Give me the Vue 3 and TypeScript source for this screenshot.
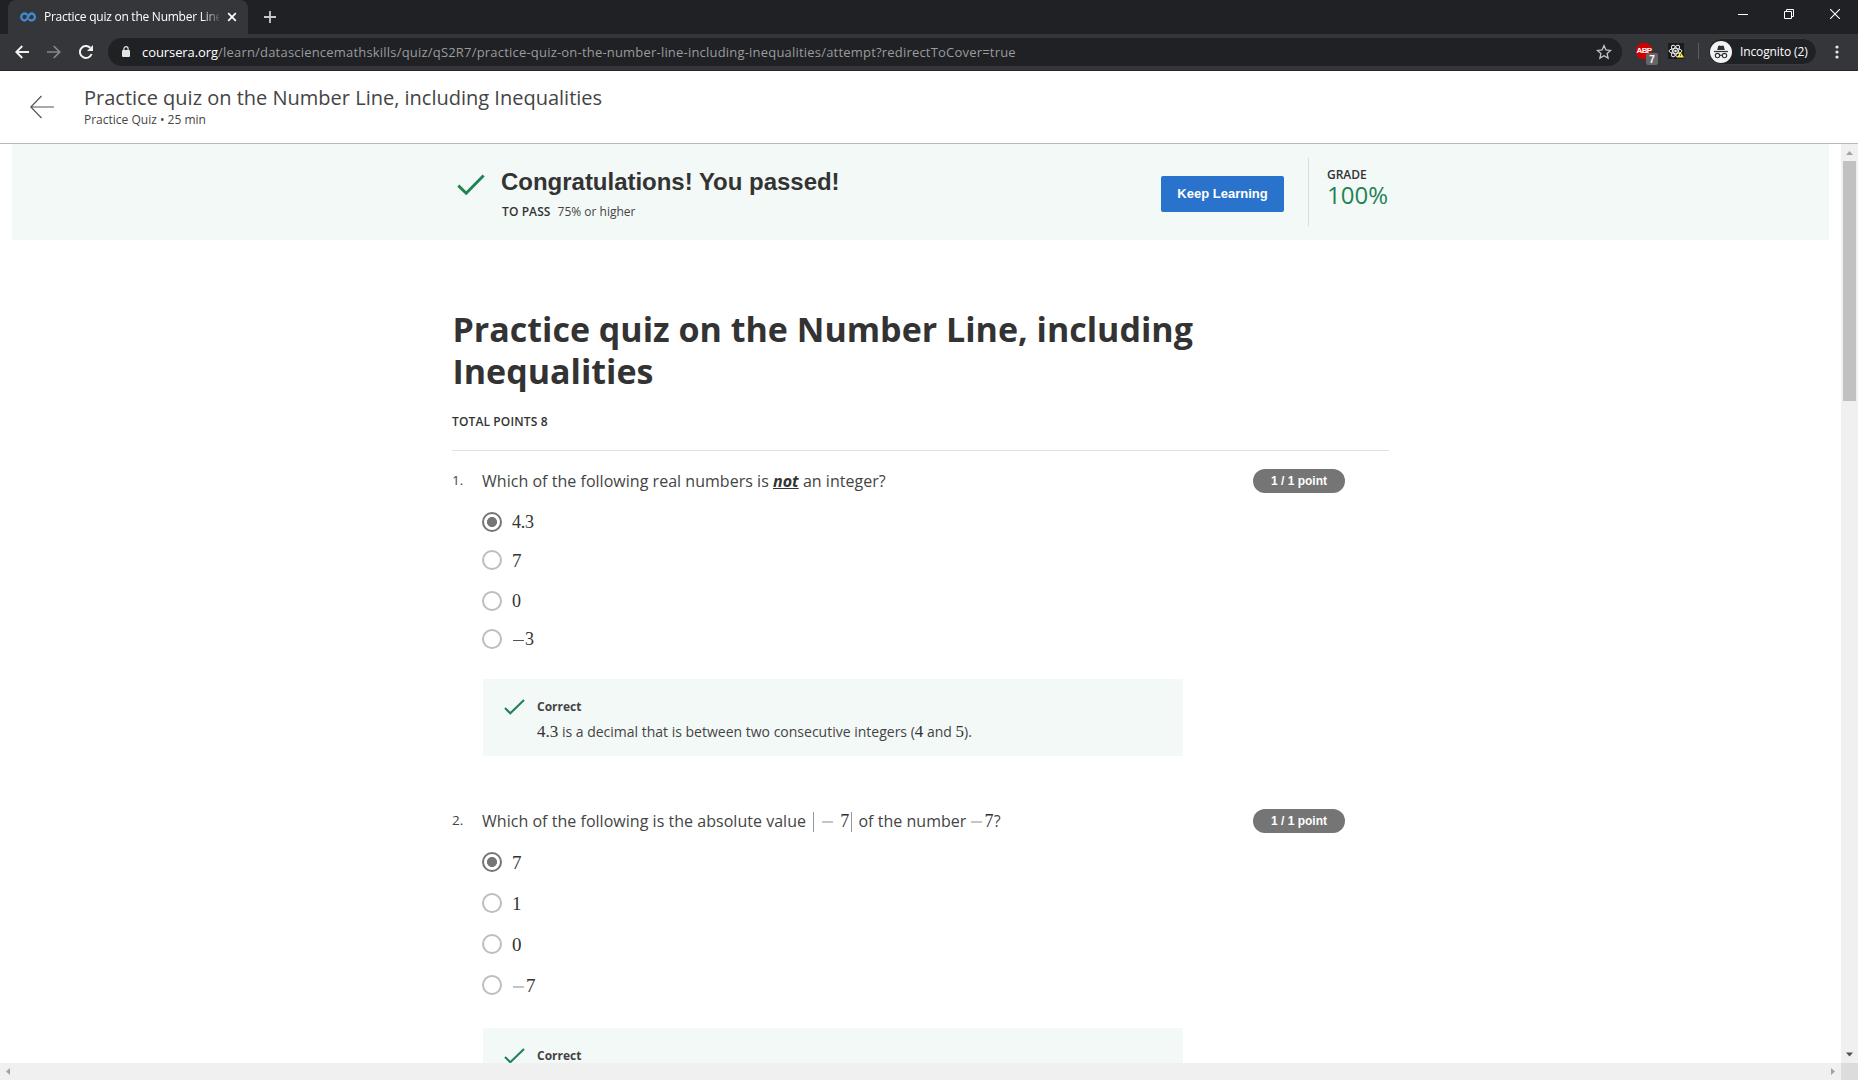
<script setup lang="ts">
interface Option {
  text: string
  checked?: boolean
  roomy?: boolean
  low?: boolean
  minus?: 'faint' | 'dark'
}

const firstOptions: Option[] = [
  { text: '4.3', checked: true },
  { text: '7', low: true },
  { text: '0', roomy: true },
  { text: '3', minus: 'dark' },
]
const secondOptions: Option[] = [
  { text: '7', checked: true, low: true },
  { text: '1', roomy: true, low: true },
  { text: '0', roomy: true, low: true },
  { text: '7', roomy: true, low: true, minus: 'faint' },
]
</script>

<template>
  <div class="window">
    <div class="tabstrip">
      <div class="tab">
        <svg class="favicon" width="16" height="10" viewBox="0 0 16 10">
          <path d="M7.300 3.200C6.700 2.100 5.900 1.500 4.700 1.500a3.500 3.500 0 0 0 0 7c3.300 0 3.300-7 6.700-7a3.500 3.500 0 0 1 0 7c-1.300 0-2.100-.6-2.700-1.600" fill="none" stroke="#3f8ad0" stroke-width="2.300" />
        </svg>
        <span class="tab-title">Practice quiz on the Number Line</span>
        <svg class="tab-close" width="10" height="10" viewBox="0 0 10 10"><path d="M1.200 1.200l7.600 7.600M8.800 1.200L1.200 8.800" stroke="#fff" stroke-width="1.700" /></svg>
      </div>
      <svg class="new-tab" width="12" height="12" viewBox="0 0 12 12"><path d="M6 0v12M0 6h12" stroke="#c8c9cb" stroke-width="1.800" /></svg>
      <div class="controls">
        <svg width="10" height="10" viewBox="0 0 10 10"><path d="M0 5.500h10" stroke="#fff" /></svg>
        <svg width="10" height="10" viewBox="0 0 10 10"><path d="M.5 2.500h7v7h-7zM2.500 2.500v-2h7v7h-2" fill="none" stroke="#fff" /></svg>
        <svg width="10" height="10" viewBox="0 0 10 10"><path d="M0 0l10 10M10 0L0 10" stroke="#fff" stroke-width="1.100" /></svg>
      </div>
    </div>

    <div class="toolbar">
      <svg class="nav" width="14" height="14" viewBox="0 0 14 14"><path d="M14 7H1.500M7.300 1L1.300 7l6 6" fill="none" stroke="#f1f1f2" stroke-width="1.900" /></svg>
      <svg class="nav" width="14" height="14" viewBox="0 0 14 14"><path d="M0 7h12.500M6.700 1l6 6-6 6" fill="none" stroke="#87888a" stroke-width="1.700" /></svg>
      <svg class="nav reload" width="14" height="14" viewBox="0 0 14 14"><path d="M12.600 9A6 6 0 1 1 11.300 2.800" fill="none" stroke="#f1f1f2" stroke-width="2" /><path d="M14 0v6H8z" fill="#f1f1f2" /></svg>
      <div class="omnibox">
        <svg width="8" height="11" viewBox="0 0 8 11"><rect y="4" width="8" height="7" rx="1" fill="#e4e4e5" /><path d="M1.900 4.500V2.800a2.100 2.100 0 0 1 4.200 0v1.700" fill="none" stroke="#e4e4e5" stroke-width="1.200" /></svg>
        <div class="url"><b>coursera.org</b>/learn/datasciencemathskills/quiz/qS2R7/practice-quiz-on-the-number-line-including-inequalities/attempt?redirectToCover=true</div>
        <svg class="star" width="16" height="16" viewBox="0 0 16 16"><path d="M8 1.600l1.900 4.300 4.700.5-3.500 3.100 1 4.600L8 11.700l-4.100 2.400 1-4.600L1.400 6.400l4.700-.5z" fill="none" stroke="#c3c4c6" stroke-width="1.300" /></svg>
      </div>
      <div class="abp">
        <svg width="16" height="16" viewBox="0 0 16 16"><path d="M4.700 0h6.600L16 4.700v6.600L11.300 16H4.700L0 11.300V4.700z" fill="#d00000" /></svg>
        <span class="abp-text">ABP</span>
        <span class="abp-count">7</span>
      </div>
      <svg class="react" width="16" height="16" viewBox="0 0 16 16">
        <rect width="16" height="16" fill="#1b1b1b" />
        <g fill="none" stroke="#e8e8e8" stroke-width="1"><ellipse cx="7.500" cy="8" rx="6.400" ry="2.500" /><ellipse cx="7.500" cy="8" rx="6.400" ry="2.500" transform="rotate(60 7.500 8)" /><ellipse cx="7.500" cy="8" rx="6.400" ry="2.500" transform="rotate(120 7.500 8)" /></g>
        <circle cx="7.500" cy="8" r="1.300" fill="#e8e8e8" />
        <path d="M12.500 9l3.500 5.600H9z" fill="#ffee3b" /><path d="M12.500 11v2" stroke="#555" stroke-width=".8" />
      </svg>
      <i class="separator"></i>
      <div class="incognito">
        <svg width="22" height="22" viewBox="0 0 22 22">
          <circle cx="11" cy="11" r="11" fill="#f1f3f4" />
          <path d="M7.200 9l1-4.100 1.500-.4 1.300.5 1.300-.5 1.500.4 1 4.100z" fill="#303134" /><path d="M4 10.500h14" stroke="#303134" stroke-width="1.200" />
          <g fill="none" stroke="#303134" stroke-width="1.100"><circle cx="7.500" cy="14.600" r="2.200" /><circle cx="14.500" cy="14.600" r="2.200" /><path d="M9.700 14.500q1.300-.8 2.600 0" /></g>
        </svg>
        <span>Incognito (2)</span>
      </div>
      <svg class="menu" width="4" height="14" viewBox="0 0 4 14"><g fill="#e8e8e9"><circle cx="2" cy="2" r="1.600" /><circle cx="2" cy="7" r="1.600" /><circle cx="2" cy="12" r="1.600" /></g></svg>
    </div>

    <header class="page-header">
      <svg class="back" width="24" height="24" viewBox="0 0 24 24"><path d="M24 12H1M11.500 1L.8 12l10.700 11" fill="none" stroke="#555" stroke-width="1.200" /></svg>
      <div>
        <div class="header-title">Practice quiz on the Number Line, including Inequalities</div>
        <div class="header-sub">Practice Quiz • 25 min</div>
      </div>
    </header>

    <div class="viewport">
      <main class="content">
        <section class="banner">
          <svg class="big-check" width="28" height="22" viewBox="0 0 28 22"><path d="M1.300 11.600L9.200 19.300 26.600 1.500" fill="none" stroke="#1f8354" stroke-width="2.900" /></svg>
          <div class="result">
            <div class="congrats">Congratulations! You passed!</div>
            <div class="pass"><b>TO PASS</b><span>75% or higher</span></div>
          </div>
          <button class="keep">Keep Learning</button>
          <div class="grade"><b>GRADE</b><span>100%</span></div>
        </section>

        <div class="quiz">
          <h1>Practice quiz on the Number Line, including<br />Inequalities</h1>
          <div class="total">TOTAL POINTS 8</div>

          <section class="question">
            <span class="num">1.</span>
            <div class="body">
              <p class="prompt prompt-one">Which of the following real numbers is <em>not</em> an integer?</p>
              <div class="options">
                <div v-for="(o, i) in firstOptions" :key="i" class="option" :class="{ roomy: o.roomy, low: o.low }">
                  <i class="radio" :class="{ checked: o.checked }"></i><span class="math"><i v-if="o.minus" class="minus" :class="o.minus"></i>{{ o.text }}</span>
                </div>
              </div>
              <div class="feedback">
                <svg width="21" height="17" viewBox="0 0 21 17"><path d="M1 8.900l5.300 5.300L20 1" fill="none" stroke="#1f8354" stroke-width="2.100" /></svg>
                <div>
                  <div class="correct">Correct</div>
                  <div class="explain"><span class="m">4.3</span> is a decimal that is between two consecutive integers (<span class="m">4</span> and <span class="m">5</span>).</div>
                </div>
              </div>
            </div>
            <span class="points">1 / 1 point</span>
          </section>

          <section class="question second">
            <span class="num">2.</span>
            <div class="body">
              <p class="prompt prompt-two">Which of the following is the absolute value <i class="bar"></i><i class="minus in-bars"></i><span class="m">7</span><i class="bar after"></i> of the number <i class="minus"></i><span class="m">7</span>?</p>
              <div class="options">
                <div v-for="(o, i) in secondOptions" :key="i" class="option" :class="{ roomy: o.roomy, low: o.low }">
                  <i class="radio" :class="{ checked: o.checked }"></i><span class="math"><i v-if="o.minus" class="minus" :class="o.minus"></i>{{ o.text }}</span>
                </div>
              </div>
              <div class="feedback">
                <svg width="21" height="17" viewBox="0 0 21 17"><path d="M1 8.900l5.300 5.300L20 1" fill="none" stroke="#1f8354" stroke-width="2.100" /></svg>
                <div><div class="correct">Correct</div></div>
              </div>
            </div>
            <span class="points">1 / 1 point</span>
          </section>
        </div>
      </main>
      <div class="vscroll">
        <svg width="17" height="17" viewBox="0 0 17 17"><path d="M5 11l3.500-4 3.500 4z" fill="#a3a3a3" /></svg>
        <div class="thumb"></div>
        <svg width="17" height="17" viewBox="0 0 17 17"><path d="M5 6.500h7l-3.500 4z" fill="#505050" /></svg>
      </div>
    </div>
    <div class="hscroll">
      <svg width="17" height="17" viewBox="0 0 17 17"><path d="M10 5v7L6 8.500z" fill="#a3a3a3" /></svg>
      <svg class="right" width="17" height="17" viewBox="0 0 17 17"><path d="M7 5v7l4-3.500z" fill="#a3a3a3" /></svg>
      <i class="corner"></i>
    </div>
  </div>
</template>

<style>
body { overflow: hidden; }
</style>

<style scoped>
* { box-sizing: border-box; }
svg { display: block; flex: none; }
.window { width: 1858px; height: 1080px; display: flex; flex-direction: column; background: #fff; color: #333; font-family: "Open Sans", sans-serif; overflow: hidden; }

.tabstrip { height: 34px; flex: none; display: flex; background: #202124; padding-left: 8px; }
.tab { width: 240px; display: flex; align-items: center; background: #35363a; border-radius: 8px 8px 0 0; padding-left: 12px; }
.tab-title { width: 175px; margin-left: 8px; white-space: nowrap; overflow: hidden; font-size: 12px; letter-spacing: -0.250px; line-height: 18px; color: #fff; -webkit-mask-image: linear-gradient(90deg, #000 158px, transparent 178px); mask-image: linear-gradient(90deg, #000 158px, transparent 178px); }
.tab-close { margin-left: 8px; }
.new-tab { margin: 11px 0 0 16px; }
.controls { margin: 9px 18px 0 auto; display: flex; gap: 36px; }

.toolbar { height: 37px; flex: none; display: flex; align-items: center; background: #35363a; border-bottom: 1px solid #242528; padding: 0 20px 2px 15px; }
.toolbar > * { flex: none; }
.nav { margin: 1px 18px 0 0; }
.nav.reload { margin-right: 15px; }
.omnibox { width: 1514px; height: 28px; margin-top: 1px; border-radius: 14px; background: #202124; display: flex; align-items: center; padding: 0 10px 0 14px; }
.url { margin-left: 12px; font-size: 13px; line-height: 20px; letter-spacing: 0.200px; color: #9a9b9d; white-space: nowrap; }
.url b { font-weight: 400; color: #fff; letter-spacing: -0.080px; }
.star { margin-left: auto; }
.abp { position: relative; margin-left: 14px; width: 16px; height: 16px; }
.abp-text { position: absolute; left: 0; top: 3px; width: 16px; text-align: center; color: #fff; font: 700 8px/10px "Liberation Sans", sans-serif; letter-spacing: -0.600px; }
.abp-count { position: absolute; left: 10px; top: 10px; width: 12px; height: 12px; border-radius: 2px; background: #666; color: #fff; text-align: center; font: 700 10px/13px "Liberation Sans", sans-serif; }
.react { margin-left: 16px; }
.separator { width: 1px; height: 16px; background: #5c5d60; margin-left: 14px; }
.incognito { width: 109px; height: 27px; margin: 1px 0 0 9px; border-radius: 14px; border: 1px solid #3c3d40; background: #202124; display: flex; align-items: center; padding-left: 1px; color: #fff; font-size: 12px; }
.incognito span { margin-left: 8px; letter-spacing: -0.120px; white-space: nowrap; }
.menu { margin: 1px 0 0 18px; }

.page-header { height: 73px; flex: none; display: flex; border-bottom: 1px solid #b9b9b9; padding: 13px 0 0 30px; color: #444; }
.back { margin: 11px 30px 0 0; }
.header-title { font-size: 20px; line-height: 27px; white-space: nowrap; }
.header-sub { margin-top: 1px; font-size: 12px; line-height: 16px; white-space: nowrap; }

.viewport { height: 919px; flex: none; display: flex; }
.content { width: 1841px; padding: 0 12px; overflow: hidden; }
.banner { height: 96px; background: #f3f9f7; display: flex; padding-left: 445px; }
.big-check { margin-top: 30px; }
.result { width: 659px; padding: 22px 0 0 16px; }
.congrats { font: 700 24px/32px "Liberation Sans", sans-serif; letter-spacing: -0.020px; white-space: nowrap; }
.pass { display: flex; gap: 7px; margin: 5px 0 0 1px; font-size: 12px; line-height: 18px; white-space: nowrap; }
.pass b { font-weight: 600; letter-spacing: 0.100px; }
.pass span { color: #444; }
.keep { width: 123px; height: 36px; margin: 32px 24px 0 17px; border: 0; border-radius: 2px; padding: 0; background: #2a73cc; color: #fff; font: 700 13px/34px "Liberation Sans", sans-serif; white-space: nowrap; }
.grade { height: 68px; margin-top: 14px; border-left: 1px solid #dcdcdc; padding: 8px 0 0 18px; display: flex; flex-direction: column; }
.grade b { font-size: 12px; line-height: 18px; font-weight: 600; }
.grade span { margin-top: -2px; font-size: 24px; line-height: 26px; color: #1f8354; }

.quiz { width: 937px; margin-left: 440px; padding-top: 68px; }
h1 { margin: 0; font-size: 34px; line-height: 42px; font-weight: 700; white-space: nowrap; padding-left: 0.500px; }
.total { height: 39px; margin-top: 20px; border-bottom: 1px solid #e1e1e1; font-size: 12px; line-height: 18px; font-weight: 600; letter-spacing: 0.130px; padding-top: 1px; }
.question { display: flex; margin-top: 18px; color: #444; }
.question.second { margin-top: 53px; }
.num { width: 30px; font-size: 13.500px; line-height: 22px; }
.body { width: 771px; }
.prompt { margin: 0 0 19px; height: 24px; font-size: 16px; line-height: 24px; letter-spacing: 0.030px; white-space: nowrap; }
.prompt em { font-weight: 700; color: #333; text-decoration: underline; }
.m { font-family: "Liberation Serif", serif; color: #333; }
.prompt .m { font-size: 18px; line-height: 20px; }
.bar { display: inline-block; width: 1px; height: 20px; background: #999; vertical-align: -5px; margin: 0 0 0 3px; }
.minus { display: inline-block; width: 11px; height: 2px; background: #c4c4c4; vertical-align: 4px; margin-right: 3px; }
.minus.dark { height: 1px; background: #555; margin: 0 1px 0 1px; }
.minus.faint { margin: 0 2px 0 1px; }
.minus.in-bars { margin: 0 7px 0 8px; }
.bar.after { margin: 0 2px 0 2px; }
.option { display: flex; align-items: center; height: 20px; margin-top: 18px; }
.option:first-child { margin-top: 0; }
.option.roomy { margin-top: 21px; }
.radio { width: 20px; height: 20px; border-radius: 50%; border: 2px solid #bdbdbd; background: #fff; }
.radio.checked { border-color: #757575; background: radial-gradient(circle, #757575 4.700px, #fff 5.300px); }
.math { margin: -1px 0 0 10px; font: 18px/20px "Liberation Serif", serif; color: #333; letter-spacing: -0.300px; }
.option.low .math { margin-top: 2px; font-size: 19px; }
.feedback { width: 700px; height: 77px; margin: 30px 0 0 1px; background: #f3f9f7; display: flex; padding: 20px 0 0 21px; }
.second .feedback { margin-top: 33px; }
.correct { margin: -1px 0 0 12px; font-size: 12px; line-height: 18px; font-weight: 700; }
.explain { margin: 6px 0 0 12px; font-size: 14px; line-height: 20px; white-space: nowrap; }
.explain .m { font-size: 17px; line-height: 18px; }
.points { width: 92px; height: 24px; flex: none; border-radius: 12px; background: #757575; color: #fff; text-align: center; font: 700 12px/24px "Liberation Sans", sans-serif; }

.vscroll { width: 17px; background: #f0f0f0; display: flex; flex-direction: column; }
.thumb { width: 13px; height: 240px; margin: 0 2px auto; background: #c1c1c1; }
.hscroll { height: 17px; flex: none; display: flex; background: #f0f0f0; }
.right { margin-left: auto; }
.corner { width: 17px; height: 17px; background: #dcdcdc; }
</style>
